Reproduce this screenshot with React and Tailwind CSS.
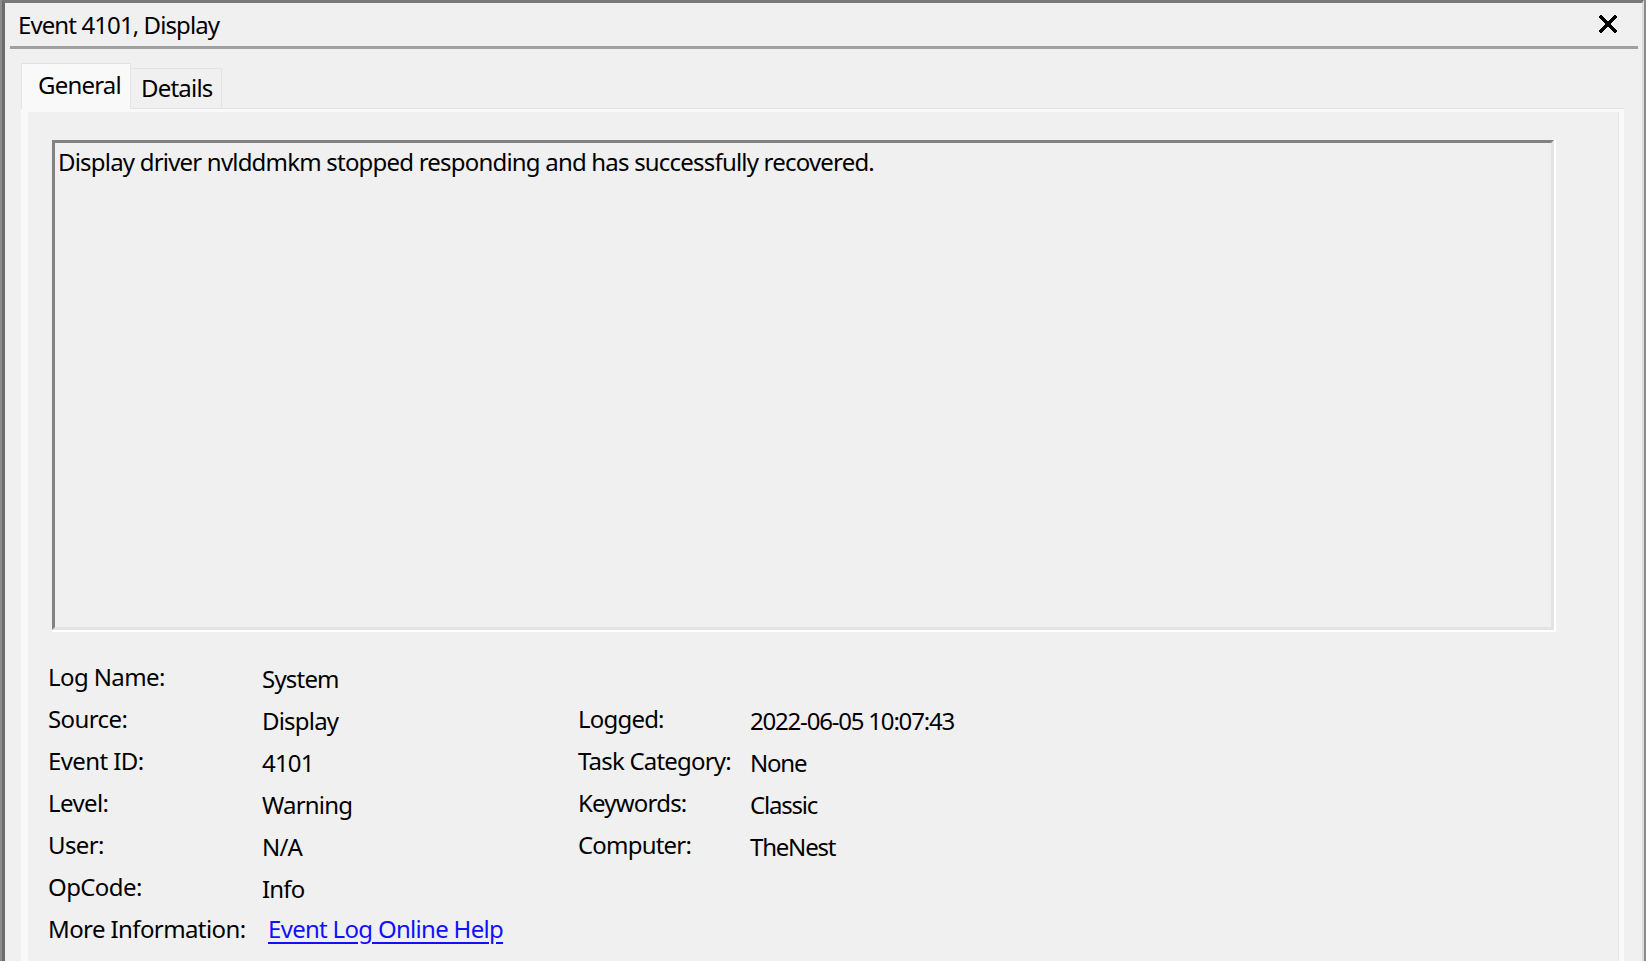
import React from 'react';

const font = { fontFamily: '"Noto Sans", "Open Sans", sans-serif' };

const rows = [
  { label: 'Log Name:', value: 'System' },
  { label: 'Source:', value: 'Display', label2: 'Logged:', value2: '2022-06-05 10:07:43' },
  { label: 'Event ID:', value: '4101', label2: 'Task Category:', value2: 'None' },
  { label: 'Level:', value: 'Warning', label2: 'Keywords:', value2: 'Classic' },
  { label: 'User:', value: 'N/A', label2: 'Computer:', value2: 'TheNest' },
  { label: 'OpCode:', value: 'Info' },
];

const CloseIcon = () => (
  <svg width="18" height="18" viewBox="0 0 18 18" shapeRendering="crispEdges">
    <path d="M2 2 L16 16 M16 2 L2 16" stroke="#000" strokeWidth="4" strokeLinecap="square" />
  </svg>
);

export default function App() {
  return (
    <div className="w-[1646px] h-[961px] overflow-hidden bg-[#f0f0f0] text-[24px] text-black" style={font}>
      {/* window frame */}
      <div className="h-full border-l-2 border-r-2 border-[#8c8c8c]">
        <div className="h-full flex flex-col border-l-[3px] border-t-[3px] border-l-[#6d6d6d] border-t-[#7a7a7a] border-r-2 border-r-[#dcdcdc]">
          {/* title bar */}
          <div className="flex items-start h-[43px] pl-[13px] pr-[25px]">
            <div className="flex-1 pt-[6px] leading-[32px] tracking-[-0.9px]">Event 4101, Display</div>
            <div className="pt-[12px]">
              <CloseIcon />
            </div>
          </div>
          <div className="h-[3px] bg-[#a0a0a0] ml-[5px] mr-[4px]" />

          {/* tabs */}
          <div className="flex items-end ml-[16px] mt-[14px] h-[46px]">
            <div className="h-[46px] w-[110px] bg-[#f9f9f9] border border-b-0 border-[#e3e3e3] pl-[16px] leading-[32px] pt-[5px] tracking-[-0.8px] relative z-10">
              General
            </div>
            <div className="h-[41px] w-[91px] bg-[#f0f0f0] border border-l-0 border-b-0 border-[#e3e3e3] pl-[10px] leading-[32px] pt-[3px] tracking-[-0.8px]">
              Details
            </div>
          </div>

          {/* tab page */}
          <div className="flex-1 ml-[16px] mr-[18px] border-t border-[#e3e3e3] -mt-[1px]">
            <div className="h-full border-l-[7px] border-t-[3px] border-r-[5px] border-[#f9f9f9]">
              <div className="h-full border-r border-[#e3e3e3]">
                <div className="pl-[24px] pt-[28px]">
                  {/* message box */}
                  <div className="w-[1504px] h-[492px] border-r-2 border-b-2 border-white">
                    <div className="h-full border-l-[3px] border-t-[3px] border-[#828282] border-r-[3px] border-b-[3px] border-r-[#e3e3e3] border-b-[#e3e3e3] pl-[3px] pt-[3px] leading-[32px] tracking-[-0.8px]">
                      Display driver nvlddmkm stopped responding and has successfully recovered.
                    </div>
                  </div>
                </div>

                {/* properties */}
                <div className="mt-[24px] pl-[20px] tracking-[-0.6px]">
                  {rows.map((r) => (
                    <div key={r.label} className="flex h-[42px] leading-[42px]">
                      <div className="w-[214px]">{r.label}</div>
                      <div className="w-[316px] pt-[2px] tracking-[-0.8px]">{r.value}</div>
                      {r.label2 && <div className="w-[172px] tracking-[-0.8px]">{r.label2}</div>}
                      {r.value2 && <div className="pt-[2px] tracking-[-1.2px]">{r.value2}</div>}
                    </div>
                  ))}
                  <div className="flex h-[42px] leading-[42px]">
                    <div className="w-[220px]">More Information:</div>
                    <a href="#" className="text-[#1010ff] underline underline-offset-[4px] tracking-[-0.7px]">
                      Event Log Online Help
                    </a>
                  </div>
                </div>
              </div>
            </div>
          </div>
        </div>
      </div>
    </div>
  );
}
